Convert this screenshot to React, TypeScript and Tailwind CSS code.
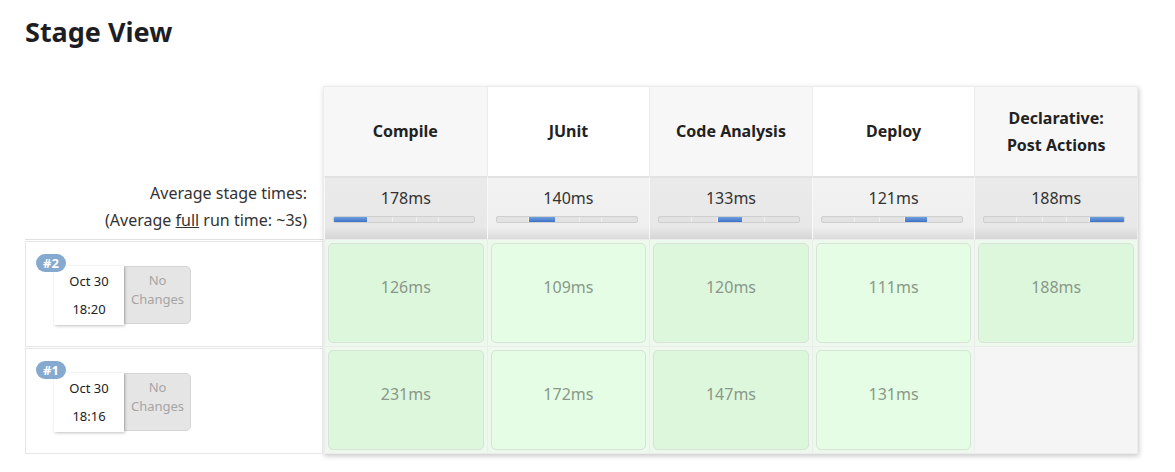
const stages = [
  { name: 'Compile', avg: 178 },
  { name: 'JUnit', avg: 140 },
  { name: 'Code Analysis', avg: 133 },
  { name: 'Deploy', avg: 121 },
  { name: 'Declarative: Post Actions', avg: 188 },
];

const runs = [
  { id: 2, date: 'Oct 30', time: '18:20', cells: [126, 109, 120, 111, 188] },
  { id: 1, date: 'Oct 30', time: '18:16', cells: [231, 172, 147, 131, null] },
];

const total = stages.reduce((s, x) => s + x.avg, 0);

function Bar({ active }: { active: number }) {
  return (
    <div className="ml-[8px] flex h-[7px] w-[142px] overflow-hidden rounded-[2px] border border-[#cfcfcf] bg-[#e2e2e2]">
      {stages.map((s, i) => (
        <div
          key={s.name}
          style={{ width: `${(s.avg / total) * 100}%` }}
          className={
            i === active
              ? 'h-full bg-gradient-to-b from-[#6f9fe0] to-[#3f72c4]'
              : 'h-full border-r border-[#f0f0f0] last:border-r-0'
          }
        />
      ))}
    </div>
  );
}

function RunLabel({ id, date, time }: { id: number; date: string; time: string }) {
  return (
    <div className="relative h-[106px] border border-[#e6e6e6] bg-white">
      <span className="absolute left-[10px] top-[12px] z-10 rounded-full bg-[#86a9d0] px-[7px] text-[13px] font-bold leading-[18px] text-white">
        #{id}
      </span>
      <div className="absolute left-[28px] top-[24px] flex">
        <div className="z-[1] flex h-[59px] w-[70px] flex-col items-center justify-center gap-[15px] bg-white text-[13px] leading-none text-[#222] shadow-[1px_1px_3px_rgba(0,0,0,0.25)]">
          <span>{date}</span>
          <span>{time}</span>
        </div>
        <div className="flex h-[58px] w-[67px] flex-col items-center justify-center rounded-r-[5px] border border-[#d5d5d5] bg-[#e5e5e5] pb-[10px] text-[13px] leading-[19px] text-[#a5a5a5]">
          <span>No</span>
          <span>Changes</span>
        </div>
      </div>
    </div>
  );
}

export default function App() {
  return (
    <main className="min-h-[472px] bg-white px-[25px] pt-[13px] font-['Noto_Sans',sans-serif] text-[#333]">
      <h1 className="text-[27px] font-bold leading-[38px] text-[#1d1d24]">Stage View</h1>

      <div className="mt-[35px] flex">
        <div className="w-[298px] pt-[89px]">
          <div className="flex h-[65px] flex-col items-end justify-center border-b border-[#e0e0e0] pr-[16px] text-[16px] leading-[27px] text-[#333]">
            <span>Average stage times:</span>
            <span>
              (Average <span className="underline">full</span> run time: ~3s)
            </span>
          </div>
          <div className="mt-[1px] flex flex-col gap-[1px]">
            {runs.map((r) => (
              <RunLabel key={r.id} id={r.id} date={r.date} time={r.time} />
            ))}
          </div>
        </div>

        <div className="grid w-[815px] grid-cols-5 border border-[#ececec] shadow-[1px_2px_5px_rgba(0,0,0,0.22)]">
          {stages.map((s, i) => (
            <div
              key={s.name}
              className={`flex h-[89px] items-center justify-center border-l border-[#ececec] px-[14px] text-center text-[16px] font-bold leading-[27px] text-[#222] first:border-l-0 ${
                i % 2 === 0 ? 'bg-[#f7f7f7]' : 'bg-white'
              }`}
            >
              {s.name === 'Declarative: Post Actions' ? (
                <span>
                  Declarative:
                  <br />
                  Post Actions
                </span>
              ) : (
                s.name
              )}
            </div>
          ))}
          {stages.map((s, i) => (
            <div
              key={s.name + '-avg'}
              className={`h-[63px] border-l border-t-2 border-[#e2e2e2] border-l-[#f8f8f8] pt-[8px] first:border-l-0 ${
                i % 2 === 0
                  ? 'bg-gradient-to-b from-[#eaeaea] via-[#e8e8e8] via-80% to-[#d6d6d6]'
                  : 'bg-gradient-to-b from-[#f2f2f2] via-[#efefef] via-80% to-[#dcdcdc]'
              }`}
            >
              <div className="text-center text-[16px] leading-[24px] text-[#333]">{s.avg}ms</div>
              <div className="mt-[6px]">
                <Bar active={i} />
              </div>
            </div>
          ))}
          {runs.map((r) =>
            r.cells.map((c, i) => (
              <div
                key={`${r.id}-${i}`}
                className={`h-[107px] border-l border-t border-[#ececec] p-[3px] first:border-l-0 ${
                  c === null ? 'bg-[#f5f5f5]' : 'bg-[#eef9ee]'
                }`}
              >
                {c !== null && (
                  <div
                    className={`flex h-full items-center justify-center rounded-[5px] border border-[#d6e3d6] pb-[12px] text-[16px] text-[#8a988a] ${
                      i % 2 === 0 ? 'bg-[#ddf7dd]' : 'bg-[#e4fde4]'
                    }`}
                  >
                    {c}ms
                  </div>
                )}
              </div>
            ))
          )}
        </div>
      </div>
    </main>
  );
}
